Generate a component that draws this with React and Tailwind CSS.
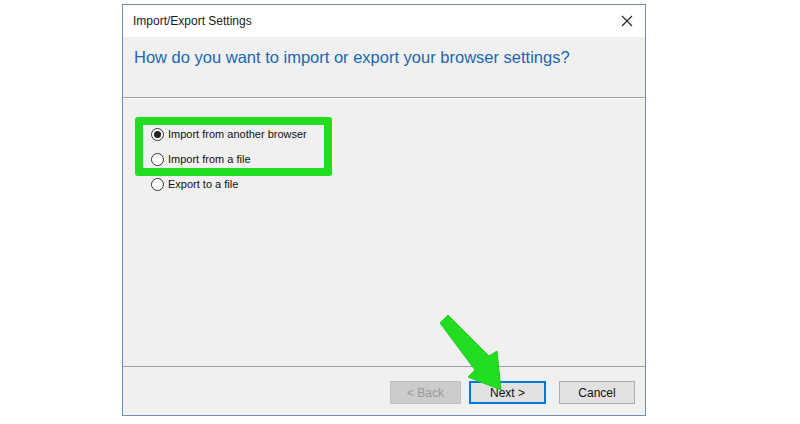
import React from "react";

function Radio({ checked, label }) {
  return (
    <div className="flex items-center h-[25px]">
      <span className="w-[13px] h-[13px] rounded-full border border-[#333333] bg-white flex items-center justify-center">
        {checked && <span className="w-[7px] h-[7px] rounded-full bg-[#222222]" />}
      </span>
      <span className="ml-[4px] text-[11px] text-[#111111]">{label}</span>
    </div>
  );
}

export default function App() {
  return (
    <div
      className="relative w-[800px] h-[424px] bg-white pl-[122px] pt-[4px]"
      style={{ fontFamily: '"Liberation Sans", Arial, sans-serif' }}
    >
      <div className="w-[524px] h-[412px] border border-[#6f8fb5] bg-[#f0f0f0] flex flex-col">
        {/* title bar */}
        <div className="h-[32px] bg-white flex items-center justify-between pl-[10px] pr-[12px]">
          <span className="text-[12px] text-[#1a1a1a]">Import/Export Settings</span>
          <svg width="12" height="12" viewBox="0 0 12 12">
            <path d="M1 1 L11 11 M11 1 L1 11" stroke="#222" strokeWidth="1.1" />
          </svg>
        </div>
        {/* heading */}
        <div className="h-[60px] pl-[11px] pt-[8px]">
          <h1 className="text-[16.5px] leading-[24px] text-[#2166b0]">
            How do you want to import or export your browser settings?
          </h1>
        </div>
        <div className="h-[2px] border-t border-[#a0a0a0] bg-white" />
        {/* options */}
        <div className="flex-1 pl-[28px] pt-[23px] flex flex-col">
          <Radio checked label="Import from another browser" />
          <Radio label="Import from a file" />
          <Radio label="Export to a file" />
        </div>
        <div className="h-[1px] bg-[#a0a0a0]" />
        {/* buttons */}
        <div className="h-[48px] flex items-start justify-end pt-[14px] pr-[10px] text-[12px]">
          <button className="w-[71px] h-[23px] bg-[#cccccc] border border-[#bfbfbf] text-[#9a9a9a]">
            &lt; Back
          </button>
          <button className="ml-[8px] w-[77px] h-[23px] bg-[#e1e1e1] border-2 border-[#0078d7] text-[#111]">
            Next &gt;
          </button>
          <button className="ml-[13px] w-[76px] h-[23px] bg-[#e1e1e1] border border-[#adadad] text-[#111]">
            Cancel
          </button>
        </div>
      </div>

      {/* highlight around the import choices */}
      <div className="absolute left-[135px] top-[117px] w-[197px] h-[59px] border-[8px] border-[#22dd22] rounded-[3px]" />

      {/* pointer arrow */}
      <svg className="absolute left-0 top-0" width="800" height="424" viewBox="0 0 800 424">
        <polygon
          points="440,323 448,315 489,356 497,351 501,390 468,377 475,370"
          fill="#22dd22"
          stroke="#1fcf1f"
          strokeWidth="1"
          strokeLinejoin="round"
        />
      </svg>
    </div>
  );
}
